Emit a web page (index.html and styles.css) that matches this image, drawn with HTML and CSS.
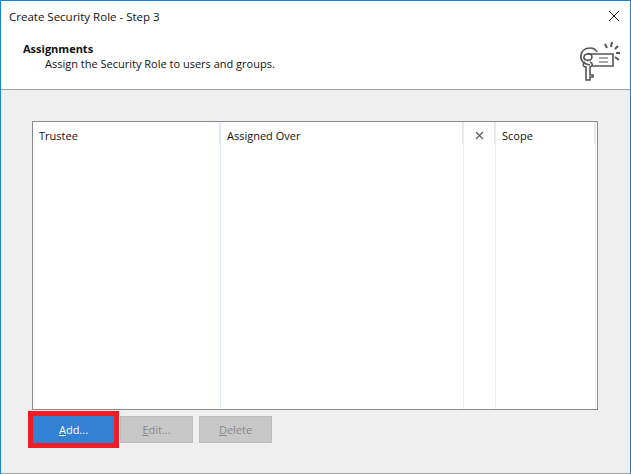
FILE: index.html
```html
<!DOCTYPE html>
<html lang="en">
<head>
<meta charset="utf-8">
<title>Create Security Role - Step 3</title>
<link rel="stylesheet" href="styles.css">
</head>
<body>
<div class="window">
  <header class="head">
    <div class="titlebar">
      <span class="title">Create Security Role - Step 3</span>
      <svg class="close" width="12" height="12" viewBox="0 0 12 12"><path d="M1 1 11 11M11 1 1 11" stroke="#111" stroke-width="1" fill="none"/></svg>
    </div>
    <div class="banner">
      <div class="banner-text">
        <div class="banner-title">Assignments</div>
        <div class="banner-sub">Assign the Security Role to users and groups.</div>
      </div>
      <svg class="role-icon" width="44" height="44" viewBox="0 0 44 44" fill="none" stroke="#555" stroke-width="1.6">
        <path d="M9 14H35V26H14"/>
        <path d="M21 18H30M21 22H30" stroke-width="1.2"/>
        <path d="M12 25C5 24 2 20 3 15C4 10 8 8 12 8C15 8 18 10 19 12"/>
        <path d="M9 14C5 15 5 19 8 20C11 21 14 20 14 17C14 14 11 13 9 14Z"/>
        <path d="M7 22C4 24 5 27 8 27V40H12V37H15V35H12V27C15 26 15 23 12 22"/>
        <path d="M27 4 29 8M34 2 33 7M40 6 37 9M42 13H38M41 20 37 17" stroke-width="2"/>
      </svg>
    </div>
  </header>
  <main class="body">
    <div class="grid">
      <div class="col col-trustee"><span class="col-label">Trustee</span></div>
      <div class="col col-over"><span class="col-label">Assigned Over</span></div>
      <div class="col col-x">
        <svg width="9" height="9" viewBox="0 0 9 9"><path d="M1 1 8 8M8 1 1 8" stroke="#555" stroke-width="1.1" fill="none"/></svg>
      </div>
      <div class="col col-scope"><span class="col-label">Scope</span></div>
      <div class="col-rest"></div>
    </div>
    <div class="actions">
      <button class="btn btn-primary" type="button"><u>A</u>dd...</button>
      <button class="btn" type="button" disabled><u>E</u>dit...</button>
      <button class="btn" type="button" disabled><u>D</u>elete</button>
    </div>
  </main>
</div>
</body>
</html>
```
FILE: styles.css
```css
* { box-sizing: border-box; }
html, body { margin: 0; padding: 0; }
body {
  width: 631px;
  height: 474px;
  overflow: hidden;
  font-family: "Open Sans", "Noto Sans", sans-serif;
  font-size: 11px;
  color: #111;
}
.window {
  width: 631px;
  height: 474px;
  display: flex;
  flex-direction: column;
  background: #efefef;
  border: 1px solid #1883d7;
  border-bottom: 0;
}
.head {
  height: 89px;
  background: #fff;
  border-bottom: 1px solid #a0a0a0;
  flex: none;
}
.titlebar {
  height: 30px;
  display: flex;
  align-items: center;
  justify-content: space-between;
  padding: 0 10px 0 8px;
}
.title { font-size: 11.5px; }
.close { display: block; }
.banner {
  display: flex;
  justify-content: space-between;
  padding: 10px 8px 0 22px;
}
.banner-title { font-weight: 700; line-height: 15px; }
.banner-sub { padding-left: 22px; line-height: 15px; }
.role-icon { margin-top: -1px; }
.body {
  flex: 1;
  padding: 31px 32px 0 31px;
  border-bottom: 1px solid #a0a0a0;
}
.grid {
  height: 289px;
  display: flex;
  background: #fff;
  border: 1px solid #8a8a8f;
}
.col {
  flex: none;
  padding: 6px 0 0 6px;
  border-right: 1px solid #e2edf5;
  background: linear-gradient(#e4e4e4, #e4e4e4) right top / 1px 22px no-repeat;
}
.col-label { line-height: 14px; }
.col-trustee { width: 188px; }
.col-over { width: 243px; }
.col-x { width: 32px; padding: 9px 0 0 11px; }
.col-x svg { display: block; }
.col-scope { width: 100px; }
.col-rest { flex: 1; }
.actions {
  display: flex;
  gap: 6px;
  margin: 6px 0 0 1px;
}
.btn {
  width: 73px;
  height: 27px;
  padding: 0;
  font: inherit;
  color: #8a8a8a;
  background: #c8c8c8;
  border: 1px solid #bdbdbd;
}
.btn-primary {
  width: 81px;
  color: #fff;
  background: #3180d4;
  border: 0;
  outline: 5px solid #ee1c25;
  margin-right: 0;
}
```
